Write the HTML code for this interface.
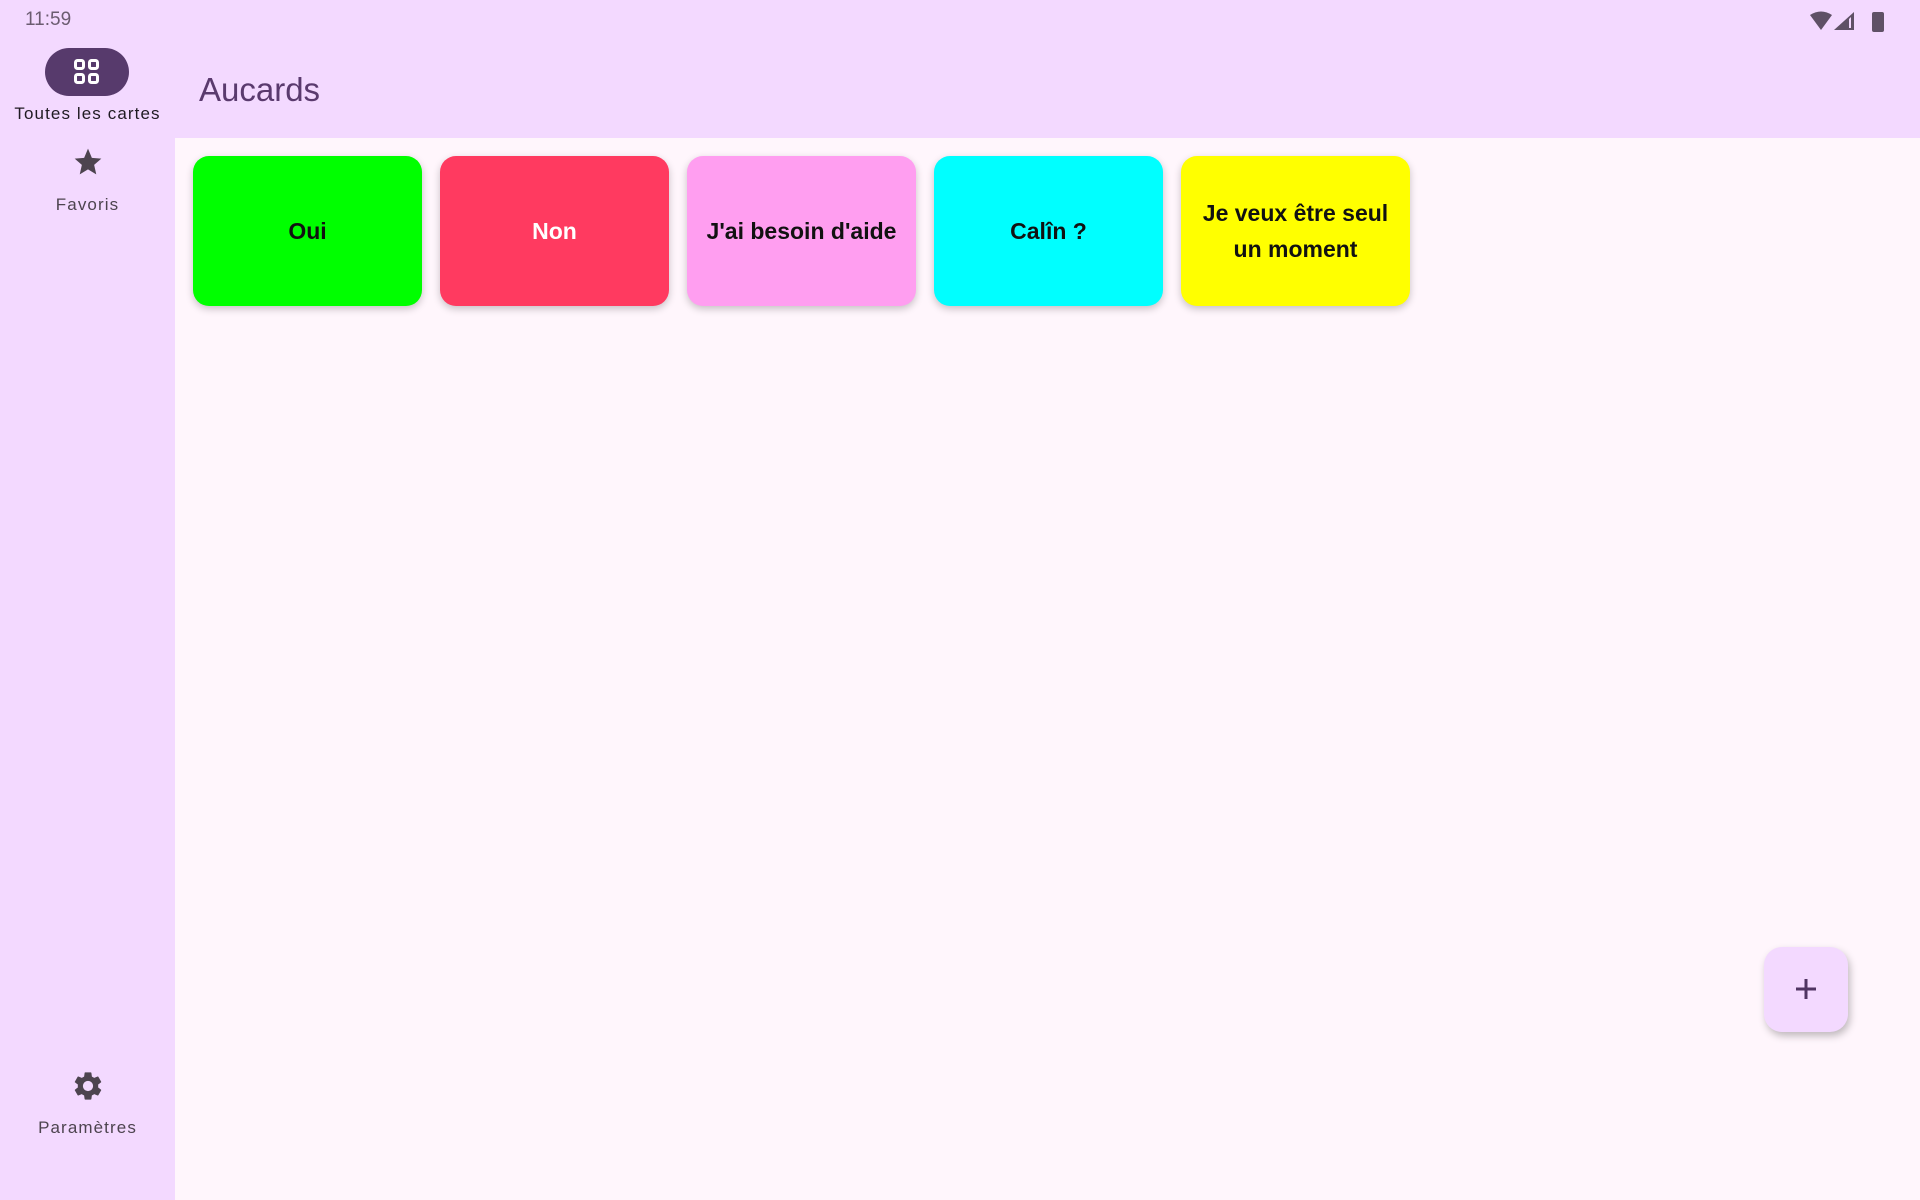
<!DOCTYPE html>
<html><head><meta charset="utf-8"><style>
*{margin:0;padding:0;box-sizing:border-box}
body{width:1920px;height:1200px;background:#f3d9ff;font-family:"Liberation Sans",sans-serif;position:relative;overflow:hidden}
.main{position:absolute;left:175px;top:138px;width:1745px;height:1062px;background:#fff6fc}
.time{position:absolute;left:25px;top:9px;font-size:19px;color:#6b5c70}
.title{position:absolute;left:199px;top:71px;font-size:33px;color:#5a3a6e}
.pill{position:absolute;left:45px;top:48px;width:84px;height:48px;border-radius:24px;background:#573a6c}
.lbl{position:absolute;width:175px;left:0;text-align:center;font-size:17px;color:#1f1a22;letter-spacing:1.1px}
.card{position:absolute;top:156px;width:229px;height:150px;border-radius:16px;display:flex;align-items:center;justify-content:center;text-align:center;font-size:23px;font-weight:bold;line-height:36px;box-shadow:0 3px 8px rgba(0,0,0,.22);color:#111}
.fab{position:absolute;left:1764px;top:947px;width:84px;height:85px;border-radius:18px;background:#f3d9ff;box-shadow:2px 4px 8px rgba(0,0,0,.25)}
</style></head><body>
<div class="main"></div>
<div class="time">11:59</div>
<svg style="position:absolute;left:1808px;top:10px" width="80" height="24" viewBox="0 0 80 24">
<path d="M2 5 Q13 -2 24 5 L13 20 Z" fill="#5f5166"/>
<path d="M26 20 L46 2 L46 20 Z" fill="#5f5166"/><path d="M41 9 L43 7 L43 18 L41 18Z" fill="#f3d9ff"/>
<rect x="64" y="2" width="12" height="20" rx="2" fill="#5f5166"/>
</svg>
<div class="title">Aucards</div>
<div class="pill"><svg style="position:absolute;left:28px;top:10px" width="28" height="28" viewBox="0 0 28 28" fill="none" stroke="#fff" stroke-width="3"><rect x="2.5" y="2.5" width="8" height="8" rx="2"/><rect x="16.5" y="2.5" width="8" height="8" rx="2"/><rect x="2.5" y="16.5" width="8" height="8" rx="2"/><rect x="16.5" y="16.5" width="8" height="8" rx="2"/></svg></div>
<div class="lbl" style="top:104px">Toutes les cartes</div>
<svg style="position:absolute;left:72px;top:146px" width="32" height="32" viewBox="0 0 24 24"><path d="M12 2l2.9 6.9 7.1.6-5.4 4.7 1.6 7.1L12 17.5 5.8 21.3l1.6-7.1L2 9.5l7.1-.6z" fill="#4d444f"/></svg>
<div class="lbl" style="top:195px;color:#4d444f">Favoris</div>
<svg style="position:absolute;left:71px;top:1069px" width="34" height="34" viewBox="0 0 24 24"><path fill="#4d444f" d="M19.14 12.94c.04-.3.06-.61.06-.94 0-.32-.02-.64-.07-.94l2.03-1.58a.49.49 0 00.12-.61l-1.92-3.32a.49.49 0 00-.59-.22l-2.39.96c-.5-.38-1.03-.7-1.620-.94l-.36-2.54a.48.48 0 00-.48-.41h-3.84c-.24 0-.43.17-.47.41l-.36 2.54c-.59.24-1.13.57-1.62.94l-2.39-.96a.48.48 0 00-.59.22L2.74 8.870c-.12.21-.08.47.12.61l2.03 1.58c-.05.3-.09.63-.09.94s.02.64.07.94l-2.03 1.58a.49.49 0 00-.12.61l1.92 3.32c.12.22.37.29.59.22l2.39-.96c.5.38 1.03.7 1.62.94l.36 2.54c.05.24.24.41.48.41h3.84c.24 0 .44-.17.47-.41l.36-2.54c.59-.24 1.13-.56 1.62-.94l2.39.96c.22.08.47 0 .59-.22l1.92-3.32c.12-.22.07-.47-.12-.61l-2.01-1.58zM12 15.6A3.6 3.6 0 1112 8.4a3.6 3.6 0 010 7.2z"/></svg>
<div class="lbl" style="top:1118px;color:#4d444f">Paramètres</div>
<div class="card" style="left:193px;background:#00ff00">Oui</div>
<div class="card" style="left:440px;background:#ff3a60;color:#fff">Non</div>
<div class="card" style="left:687px;background:#ff9ef0">J'ai besoin d'aide</div>
<div class="card" style="left:934px;background:#00ffff">Calîn ?</div>
<div class="card" style="left:1181px;background:#ffff00">Je veux être seul<br>un moment</div>
<div class="fab"><svg style="position:absolute;left:31px;top:31px" width="22" height="22" viewBox="0 0 22 22"><path d="M11 1v20M1 11h20" stroke="#4f3462" stroke-width="3"/></svg></div>
</body></html>
